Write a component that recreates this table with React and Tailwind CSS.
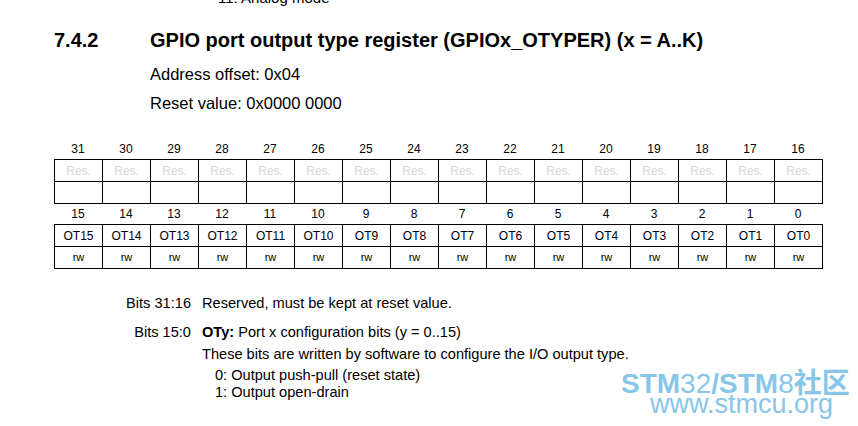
import React from "react";

const top = Array.from({ length: 16 }, (_, i) => 31 - i);
const bot = Array.from({ length: 16 }, (_, i) => 15 - i);

function Table({ nums, row1, row2, row1Class, row2Class }) {
  return (
    <div className="w-[769px]">
      <div className="grid grid-cols-[repeat(16,48px)] h-[21px] items-center">
        {nums.map((n) => (
          <div key={n} className="text-center text-[12px] leading-none text-black">{n}</div>
        ))}
      </div>
      <div className="border-l border-t border-black grid grid-cols-[repeat(16,48px)]">
        {nums.map((n, i) => (
          <div key={"a" + n} className={"h-[22px] border-r border-b border-black flex items-center justify-center " + row1Class}>
            {row1(i)}
          </div>
        ))}
        {nums.map((n, i) => (
          <div key={"b" + n} className={"h-[22px] border-r border-b border-black flex items-center justify-center " + row2Class}>
            {row2(i)}
          </div>
        ))}
      </div>
    </div>
  );
}

export default function App() {
  return (
    <div className="w-[858px] h-[426px] bg-white overflow-hidden relative font-['Liberation_Sans',Arial,sans-serif] text-black">
      <div className="pl-[218px] -mt-[9px] h-[14px] text-[15px] leading-[14px]">11: Analog mode</div>
      <div className="flex items-center mt-[22px] h-[26px] text-[20px] font-bold pl-[54px]">
        <span className="w-[96px]">7.4.2</span>
        <span>GPIO port output type register (GPIOx_OTYPER) (x = A..K)</span>
      </div>
      <div className="pl-[150px] text-[16.5px] leading-[18px] mt-[12px]">Address offset: 0x04</div>
      <div className="pl-[150px] text-[16.5px] leading-[18px] mt-[11px]">Reset value: 0x0000 0000</div>
      <div className="pl-[54px] mt-[26px]">
        <Table
          nums={top}
          row1={() => "Res."}
          row2={() => ""}
          row1Class="text-[12px] text-[#d6d6d6]"
          row2Class=""
        />
        <div className="-mt-[1px]">
          <Table
            nums={bot}
            row1={(i) => "OT" + (15 - i)}
            row2={() => "rw"}
            row1Class="text-[12px]"
            row2Class="text-[11px]"
          />
        </div>
      </div>
      <div className="mt-[26px] text-[14.6px] leading-[17px]">
        <div className="flex">
          <div className="w-[202px] text-right pr-[11px]">Bits 31:16</div>
          <div>Reserved, must be kept at reset value.</div>
        </div>
        <div className="flex mt-[12px]">
          <div className="w-[202px] text-right pr-[11px]">Bits 15:0</div>
          <div>
            <div><span className="font-bold">OTy:</span> Port x configuration bits (y = 0..15)</div>
            <div className="mt-[5px]">These bits are written by software to configure the I/O output type.</div>
            <div className="pl-[13px] mt-[3px] leading-[18px]">0: Output push-pull (reset state)</div>
            <div className="pl-[13px] leading-[17px]">1: Output open-drain</div>
          </div>
        </div>
      </div>
      <div className="absolute left-[621px] top-[367px] text-[#88c6e8] leading-none">
        <div className="text-[28px] h-[24px] whitespace-nowrap">
          <span className="font-bold">STM</span><span>32</span><span className="font-bold">/STM</span><span>8</span><span className="font-bold font-['Noto_Sans_CJK_SC',sans-serif]">社区</span>
        </div>
        <div className="text-[27px] pl-[29px] whitespace-nowrap">www.stmcu.org</div>
      </div>
    </div>
  );
}
